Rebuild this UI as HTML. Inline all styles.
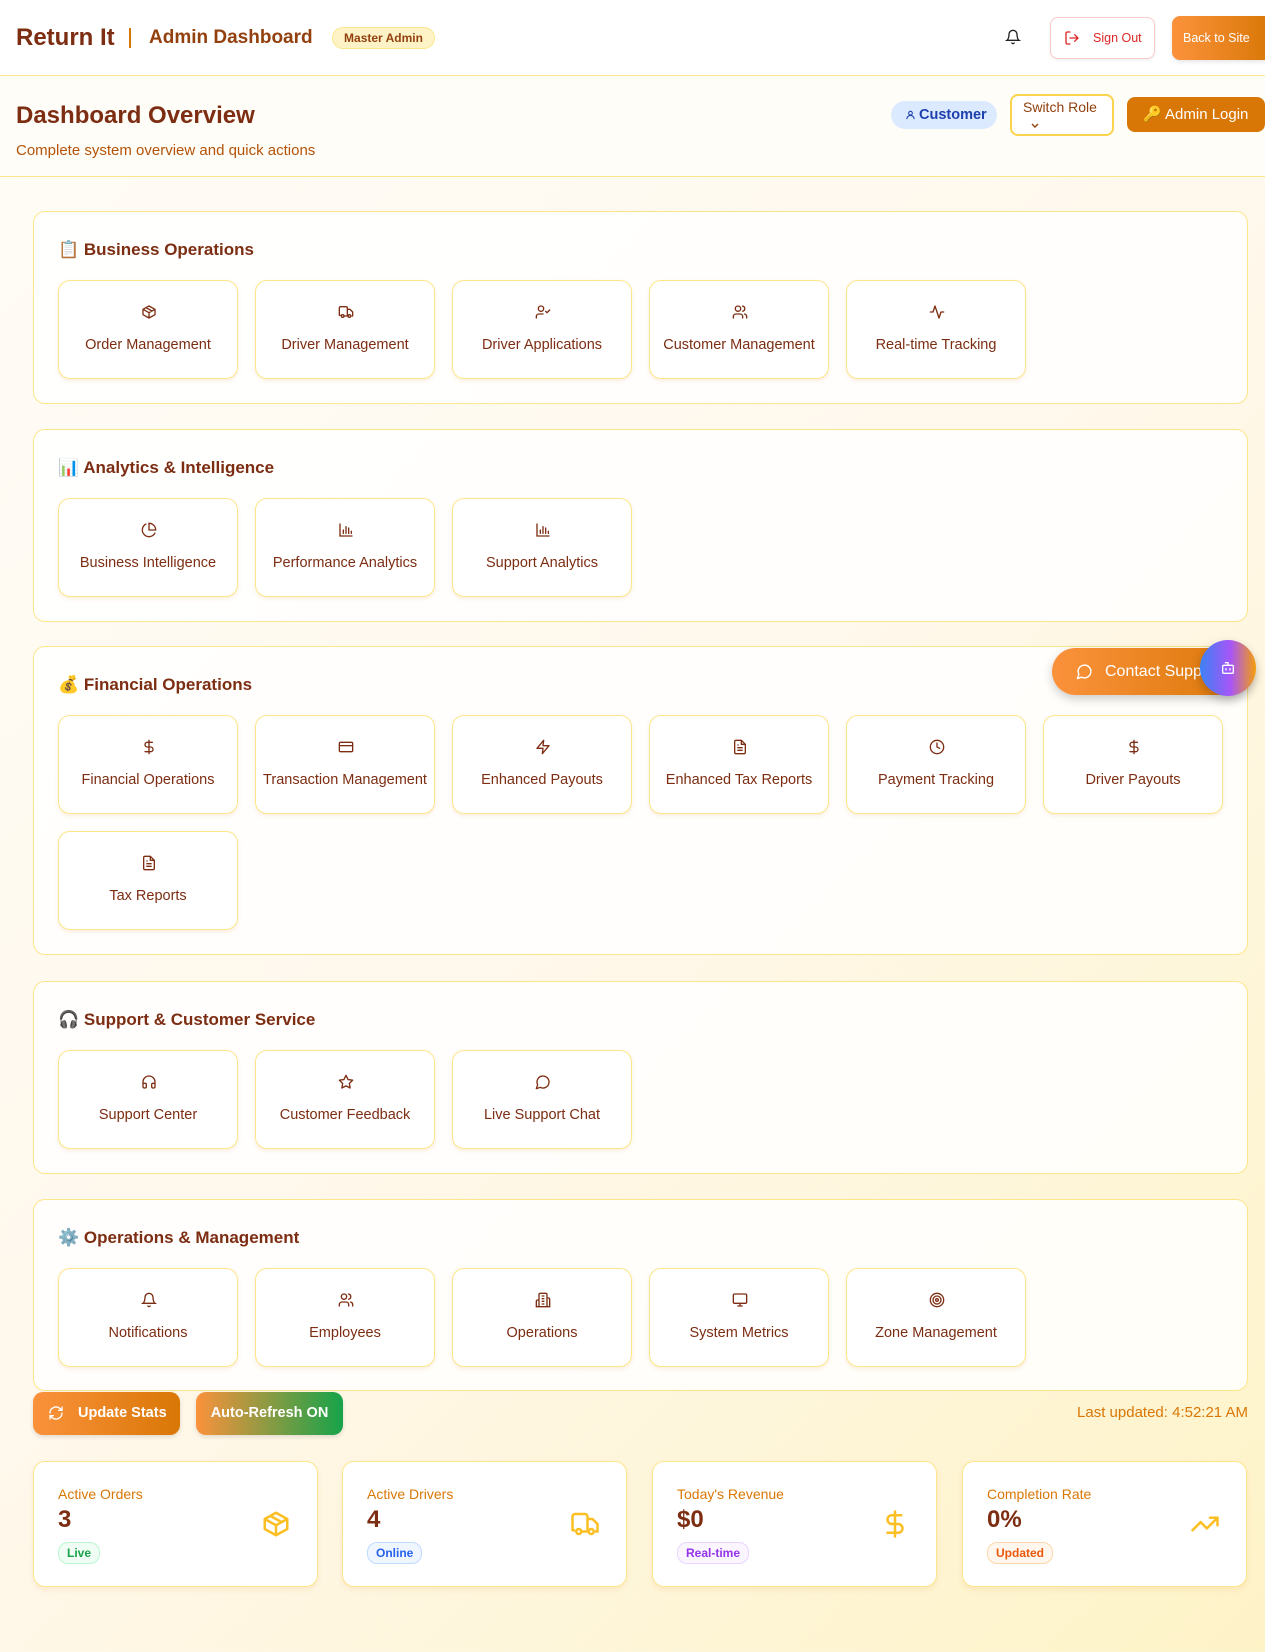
<!DOCTYPE html>
<html><head><meta charset="utf-8"><style>
*{box-sizing:border-box;margin:0;padding:0}
body{width:1265px;height:1652px;overflow:hidden;font-family:"Liberation Sans",sans-serif;color:#7c2d12;background:linear-gradient(135deg,#fffcf7 0%,#fff8ec 50%,#fef3c7 100%);position:relative}
.hdr{position:absolute;left:0;top:0;width:1265px;height:76px;background:#fff;border-bottom:1.5px solid #fde68a}
.sub{position:absolute;left:0;top:76px;width:1265px;height:101px;background:#fffdf8;border-bottom:1.5px solid #fde68a}
.abs{position:absolute}
.sec{position:absolute;left:33px;width:1215px;background:rgba(255,255,255,.85);border:1.5px solid #fde68a;border-radius:12px}
.sec h2{position:absolute;left:24px;top:26px;font-size:17px;font-weight:bold;color:#7c2d12;line-height:24px}
.grid{position:absolute;left:24px;top:68px;width:1166px;display:grid;grid-template-columns:repeat(6,180px);column-gap:17px;row-gap:17px}
.tile{height:99px;background:#fff;border:1.5px solid #fde68a;border-radius:12px;box-shadow:0 2px 4px rgba(217,119,6,.12);text-align:center;position:relative}
.tile svg{position:absolute;left:82px;top:23px;width:16px;height:16px}
.tile span{position:absolute;left:0;right:0;top:56px;font-size:14.5px;color:#7c2d12;white-space:nowrap}
.card{position:absolute;top:1461px;width:285px;height:126px;background:#fff;border:1.5px solid #fde68a;border-radius:12px;box-shadow:0 3px 6px rgba(217,119,6,.1)}
.card .l{position:absolute;left:24px;top:24px;font-size:14px;color:#d97706}
.card .v{position:absolute;left:24px;top:44px;font-size:24px;font-weight:bold;color:#7c2d12}
.card .b{position:absolute;left:24px;top:80px;font-size:12px;font-weight:bold;padding:3px 8px;border-radius:10px;border:1px solid}
.card svg{position:absolute;right:26px;top:47px;width:30px;height:30px}
</style></head><body>
<div class="hdr">
<div class="abs" style="left:16px;top:24px;font-size:24px;font-weight:bold;color:#7c2d12">Return It</div>
<div class="abs" style="left:129px;top:28px;width:1.5px;height:20px;background:#d97706"></div>
<div class="abs" style="left:149px;top:27px;font-size:19px;font-weight:bold;color:#92400e">Admin Dashboard</div>
<div class="abs" style="left:332px;top:27px;width:103px;height:22px;border-radius:11px;background:#fef3c7;border:1px solid #fde68a;font-size:12px;font-weight:bold;color:#92400e;text-align:center;line-height:20px">Master Admin</div>
<svg class="abs" style="left:1005px;top:29px" width="16" height="16" viewBox="0 0 24 24" fill="none" stroke="#222" stroke-width="2" stroke-linecap="round"><path d="M6 8a6 6 0 0 1 12 0c0 7 3 9 3 9H3s3-2 3-9M10.3 21a1.9 1.9 0 0 0 3.4 0"/></svg>
<div class="abs" style="left:1050px;top:17px;width:105px;height:42px;border:1.5px solid #fecaca;border-radius:8px;background:#fff;box-shadow:0 1px 3px rgba(0,0,0,.08)">
<svg class="abs" style="left:13px;top:12px" width="16" height="16" viewBox="0 0 24 24" fill="none" stroke="#dc2626" stroke-width="2" stroke-linecap="round"><path d="M9 21H5a2 2 0 0 1-2-2V5a2 2 0 0 1 2-2h4M16 17l5-5-5-5M21 12H9"/></svg>
<span class="abs" style="left:42px;top:13px;font-size:12.5px;color:#dc2626">Sign Out</span></div>
<div class="abs" style="left:1172px;top:16px;width:100px;height:44px;border-radius:8px;background:linear-gradient(90deg,#fb923c,#d97706);color:#fff;font-size:12.5px;line-height:44px;padding-left:11px;box-shadow:0 2px 4px rgba(0,0,0,.1)">Back to Site</div>
</div>
<div class="sub">
<div class="abs" style="left:16px;top:26px;font-size:24px;font-weight:bold;color:#7c2d12">Dashboard Overview</div>
<div class="abs" style="left:16px;top:66px;font-size:15px;color:#b45309">Complete system overview and quick actions</div>
<div class="abs" style="left:891px;top:25px;width:106px;height:28px;border-radius:14px;background:#dbeafe;color:#1e40af;font-size:14.5px;font-weight:bold;line-height:28px;padding-left:28px">
<svg class="abs" style="left:14px;top:8px" width="11" height="12" viewBox="0 0 24 24" fill="none" stroke="#1e40af" stroke-width="2.4"><circle cx="12" cy="8" r="4"/><path d="M4 21a8 8 0 0 1 16 0"/></svg>Customer</div>
<div class="abs" style="left:1010px;top:18px;width:104px;height:42px;border:2px solid #fcd34d;border-radius:8px;background:#fff;color:#92400e;font-size:14px;padding:3px 0 0 11px">Switch Role
<svg class="abs" style="left:18px;top:26px" width="10" height="8" viewBox="0 0 10 8" fill="none" stroke="#92400e" stroke-width="1.4"><path d="M2 2l3 3 3-3"/></svg></div>
<div class="abs" style="left:1127px;top:21px;width:138px;height:35px;border-radius:8px;background:#d97706;color:#fff;font-size:15px;line-height:35px;padding-left:16px">🔑 Admin Login</div>
</div>

<div class="sec" style="top:211px;height:193px"><h2>📋 Business Operations</h2><div class="grid">
<div class="tile"><svg viewBox="0 0 24 24" fill="none" stroke="#7c2d12" stroke-width="2" stroke-linejoin="round"><path d="M21 8 12 3 3 8v8l9 5 9-5z M3 8l9 5 9-5M12 13v8M7.5 5.5l9 5"/></svg><span>Order Management</span></div>
<div class="tile"><svg viewBox="0 0 24 24" fill="none" stroke="#7c2d12" stroke-width="2" stroke-linejoin="round"><path d="M14 18V6a2 2 0 0 0-2-2H4a2 2 0 0 0-2 2v11h2M15 18H9M14 8h4l4 4v6h-2"/><circle cx="17" cy="18" r="2"/><circle cx="7" cy="18" r="2"/></svg><span>Driver Management</span></div>
<div class="tile"><svg viewBox="0 0 24 24" fill="none" stroke="#7c2d12" stroke-width="2" stroke-linecap="round"><circle cx="9" cy="7" r="4"/><path d="M2 21v-2a4 4 0 0 1 4-4h6M16 11l2 2 4-4"/></svg><span>Driver Applications</span></div>
<div class="tile"><svg viewBox="0 0 24 24" fill="none" stroke="#7c2d12" stroke-width="2" stroke-linecap="round"><circle cx="9" cy="7" r="4"/><path d="M2 21v-2a4 4 0 0 1 4-4h6a4 4 0 0 1 4 4v2M16 3.1a4 4 0 0 1 0 7.8M22 21v-2a4 4 0 0 0-3-3.9"/></svg><span>Customer Management</span></div>
<div class="tile"><svg viewBox="0 0 24 24" fill="none" stroke="#7c2d12" stroke-width="2" stroke-linecap="round" stroke-linejoin="round"><path d="M22 12h-4l-3 9L9 3l-3 9H2"/></svg><span>Real-time Tracking</span></div>
</div></div>

<div class="sec" style="top:429px;height:193px"><h2>📊 Analytics &amp; Intelligence</h2><div class="grid">
<div class="tile"><svg viewBox="0 0 24 24" fill="none" stroke="#7c2d12" stroke-width="2"><path d="M21.2 15.9A10 10 0 1 1 8 2.8M22 12A10 10 0 0 0 12 2v10z"/></svg><span>Business Intelligence</span></div>
<div class="tile"><svg viewBox="0 0 24 24" fill="none" stroke="#7c2d12" stroke-width="2" stroke-linecap="round"><path d="M3 3v18h18M8 17v-5M12 17V7M16 17v-8M20 17v-3"/></svg><span>Performance Analytics</span></div>
<div class="tile"><svg viewBox="0 0 24 24" fill="none" stroke="#7c2d12" stroke-width="2" stroke-linecap="round"><path d="M3 3v18h18M8 17v-5M12 17V7M16 17v-8M20 17v-3"/></svg><span>Support Analytics</span></div>
</div></div>

<div class="sec" style="top:646px;height:309px"><h2>💰 Financial Operations</h2><div class="grid">
<div class="tile"><svg viewBox="0 0 24 24" fill="none" stroke="#7c2d12" stroke-width="2" stroke-linecap="round"><path d="M12 2v20M17 5H9.5a3.5 3.5 0 0 0 0 7h5a3.5 3.5 0 0 1 0 7H6"/></svg><span>Financial Operations</span></div>
<div class="tile"><svg viewBox="0 0 24 24" fill="none" stroke="#7c2d12" stroke-width="2"><rect x="2" y="5" width="20" height="14" rx="2"/><path d="M2 10h20"/></svg><span>Transaction Management</span></div>
<div class="tile"><svg viewBox="0 0 24 24" fill="none" stroke="#7c2d12" stroke-width="2" stroke-linejoin="round"><path d="M13 2 3 14h9l-1 8 10-12h-9z"/></svg><span>Enhanced Payouts</span></div>
<div class="tile"><svg viewBox="0 0 24 24" fill="none" stroke="#7c2d12" stroke-width="2" stroke-linejoin="round"><path d="M14 2H6a2 2 0 0 0-2 2v16a2 2 0 0 0 2 2h12a2 2 0 0 0 2-2V8zM14 2v6h6M16 13H8M16 17H8M10 9H8"/></svg><span>Enhanced Tax Reports</span></div>
<div class="tile"><svg viewBox="0 0 24 24" fill="none" stroke="#7c2d12" stroke-width="2" stroke-linecap="round"><circle cx="12" cy="12" r="10"/><path d="M12 6v6l4 2"/></svg><span>Payment Tracking</span></div>
<div class="tile"><svg viewBox="0 0 24 24" fill="none" stroke="#7c2d12" stroke-width="2" stroke-linecap="round"><path d="M12 2v20M17 5H9.5a3.5 3.5 0 0 0 0 7h5a3.5 3.5 0 0 1 0 7H6"/></svg><span>Driver Payouts</span></div>
<div class="tile"><svg viewBox="0 0 24 24" fill="none" stroke="#7c2d12" stroke-width="2" stroke-linejoin="round"><path d="M14 2H6a2 2 0 0 0-2 2v16a2 2 0 0 0 2 2h12a2 2 0 0 0 2-2V8zM14 2v6h6M16 13H8M16 17H8M10 9H8"/></svg><span>Tax Reports</span></div>
</div></div>

<div class="sec" style="top:981px;height:193px"><h2>🎧 Support &amp; Customer Service</h2><div class="grid">
<div class="tile"><svg viewBox="0 0 24 24" fill="none" stroke="#7c2d12" stroke-width="2"><path d="M3 14h3a2 2 0 0 1 2 2v3a2 2 0 0 1-2 2H5a2 2 0 0 1-2-2v-7a9 9 0 0 1 18 0v7a2 2 0 0 1-2 2h-1a2 2 0 0 1-2-2v-3a2 2 0 0 1 2-2h3"/></svg><span>Support Center</span></div>
<div class="tile"><svg viewBox="0 0 24 24" fill="none" stroke="#7c2d12" stroke-width="2" stroke-linejoin="round"><path d="m12 2 3.1 6.3 6.9 1-5 4.9 1.2 6.8L12 17.8 5.8 21 7 14.2 2 9.3l6.9-1z"/></svg><span>Customer Feedback</span></div>
<div class="tile"><svg viewBox="0 0 24 24" fill="none" stroke="#7c2d12" stroke-width="2" stroke-linejoin="round"><path d="M7.9 20A9 9 0 1 0 4 16.1L2 22z"/></svg><span>Live Support Chat</span></div>
</div></div>

<div class="sec" style="top:1199px;height:192px"><h2>⚙️ Operations &amp; Management</h2><div class="grid">
<div class="tile"><svg viewBox="0 0 24 24" fill="none" stroke="#7c2d12" stroke-width="2" stroke-linecap="round"><path d="M6 8a6 6 0 0 1 12 0c0 7 3 9 3 9H3s3-2 3-9M10.3 21a1.9 1.9 0 0 0 3.4 0"/></svg><span>Notifications</span></div>
<div class="tile"><svg viewBox="0 0 24 24" fill="none" stroke="#7c2d12" stroke-width="2" stroke-linecap="round"><circle cx="9" cy="7" r="4"/><path d="M2 21v-2a4 4 0 0 1 4-4h6a4 4 0 0 1 4 4v2M16 3.1a4 4 0 0 1 0 7.8M22 21v-2a4 4 0 0 0-3-3.9"/></svg><span>Employees</span></div>
<div class="tile"><svg viewBox="0 0 24 24" fill="none" stroke="#7c2d12" stroke-width="2"><path d="M6 22V4a2 2 0 0 1 2-2h8a2 2 0 0 1 2 2v18zM6 12H4a2 2 0 0 0-2 2v8h4M18 9h2a2 2 0 0 1 2 2v11h-4M10 6h4M10 10h4M10 14h4M10 18h4"/></svg><span>Operations</span></div>
<div class="tile"><svg viewBox="0 0 24 24" fill="none" stroke="#7c2d12" stroke-width="2"><rect x="2" y="3" width="20" height="14" rx="2"/><path d="M8 21h8M12 17v4"/></svg><span>System Metrics</span></div>
<div class="tile"><svg viewBox="0 0 24 24" fill="none" stroke="#7c2d12" stroke-width="2"><circle cx="12" cy="12" r="10"/><circle cx="12" cy="12" r="6"/><circle cx="12" cy="12" r="2"/></svg><span>Zone Management</span></div>
</div></div>

<div class="abs" style="left:1052px;top:648px;width:200px;height:47px;border-radius:24px;background:linear-gradient(90deg,#fb923c,#d97706);box-shadow:0 4px 10px rgba(0,0,0,.2);color:#fff;font-size:16px;line-height:47px;padding-left:53px;overflow:hidden;white-space:nowrap">
<svg class="abs" style="left:24px;top:15px" width="17" height="17" viewBox="0 0 24 24" fill="none" stroke="#fff" stroke-width="2" stroke-linejoin="round"><path d="M7.9 20A9 9 0 1 0 4 16.1L2 22z"/></svg>Contact Support</div>
<div class="abs" style="left:1200px;top:640px;width:56px;height:56px;border-radius:50%;background:linear-gradient(90deg,#3b82f6,#a855f7 55%,#f59e0b);box-shadow:0 4px 10px rgba(0,0,0,.2)">
<svg class="abs" style="left:20px;top:20px" width="16" height="16" viewBox="0 0 24 24" fill="none" stroke="#fff" stroke-width="2" stroke-linecap="round"><path d="M12 8V4H8"/><rect x="4" y="8" width="16" height="12" rx="2"/><path d="M9 13v2M15 13v2"/></svg></div>

<div class="abs" style="left:33px;top:1392px;width:147px;height:43px;border-radius:10px;background:linear-gradient(90deg,#fb923c,#d97706);color:#fff;font-size:14.5px;font-weight:bold;line-height:43px;padding-left:45px;box-shadow:0 2px 5px rgba(0,0,0,.12)">
<svg class="abs" style="left:15px;top:13px" width="16" height="16" viewBox="0 0 24 24" fill="none" stroke="#fff" stroke-width="2" stroke-linecap="round"><path d="M3 12a9 9 0 0 1 15-6.7L21 8M21 3v5h-5M21 12a9 9 0 0 1-15 6.7L3 16M8 16H3v5"/></svg>Update Stats</div>
<div class="abs" style="left:196px;top:1392px;width:147px;height:43px;border-radius:10px;background:linear-gradient(90deg,#fb923c,#16a34a);color:#fff;font-size:14.5px;font-weight:bold;line-height:43px;text-align:center;box-shadow:0 2px 5px rgba(0,0,0,.12)">Auto-Refresh ON</div>
<div class="abs" style="right:17px;top:1404px;font-size:15px;color:#d97706">Last updated: 4:52:21 AM</div>

<div class="card" style="left:33px"><div class="l">Active Orders</div><div class="v">3</div><div class="b" style="color:#16a34a;border-color:#bbf7d0;background:#f0fdf4">Live</div>
<svg viewBox="0 0 24 24" fill="none" stroke="#fbbf24" stroke-width="2" stroke-linejoin="round"><path d="M21 8 12 3 3 8v8l9 5 9-5z M3 8l9 5 9-5M12 13v8M7.5 5.5l9 5"/></svg></div>
<div class="card" style="left:342px"><div class="l">Active Drivers</div><div class="v">4</div><div class="b" style="color:#2563eb;border-color:#bfdbfe;background:#eff6ff">Online</div>
<svg viewBox="0 0 24 24" fill="none" stroke="#fbbf24" stroke-width="2" stroke-linejoin="round"><path d="M14 18V6a2 2 0 0 0-2-2H4a2 2 0 0 0-2 2v11h2M15 18H9M14 8h4l4 4v6h-2"/><circle cx="17" cy="18" r="2"/><circle cx="7" cy="18" r="2"/></svg></div>
<div class="card" style="left:652px"><div class="l">Today's Revenue</div><div class="v">$0</div><div class="b" style="color:#9333ea;border-color:#e9d5ff;background:#faf5ff">Real-time</div>
<svg viewBox="0 0 24 24" fill="none" stroke="#fbbf24" stroke-width="2" stroke-linecap="round"><path d="M12 2v20M17 5H9.5a3.5 3.5 0 0 0 0 7h5a3.5 3.5 0 0 1 0 7H6"/></svg></div>
<div class="card" style="left:962px"><div class="l">Completion Rate</div><div class="v">0%</div><div class="b" style="color:#ea580c;border-color:#fed7aa;background:#fff7ed">Updated</div>
<svg viewBox="0 0 24 24" fill="none" stroke="#fbbf24" stroke-width="2" stroke-linecap="round" stroke-linejoin="round"><path d="m22 7-8.5 8.5-5-5L2 17M16 7h6v6"/></svg></div>
</body></html>
